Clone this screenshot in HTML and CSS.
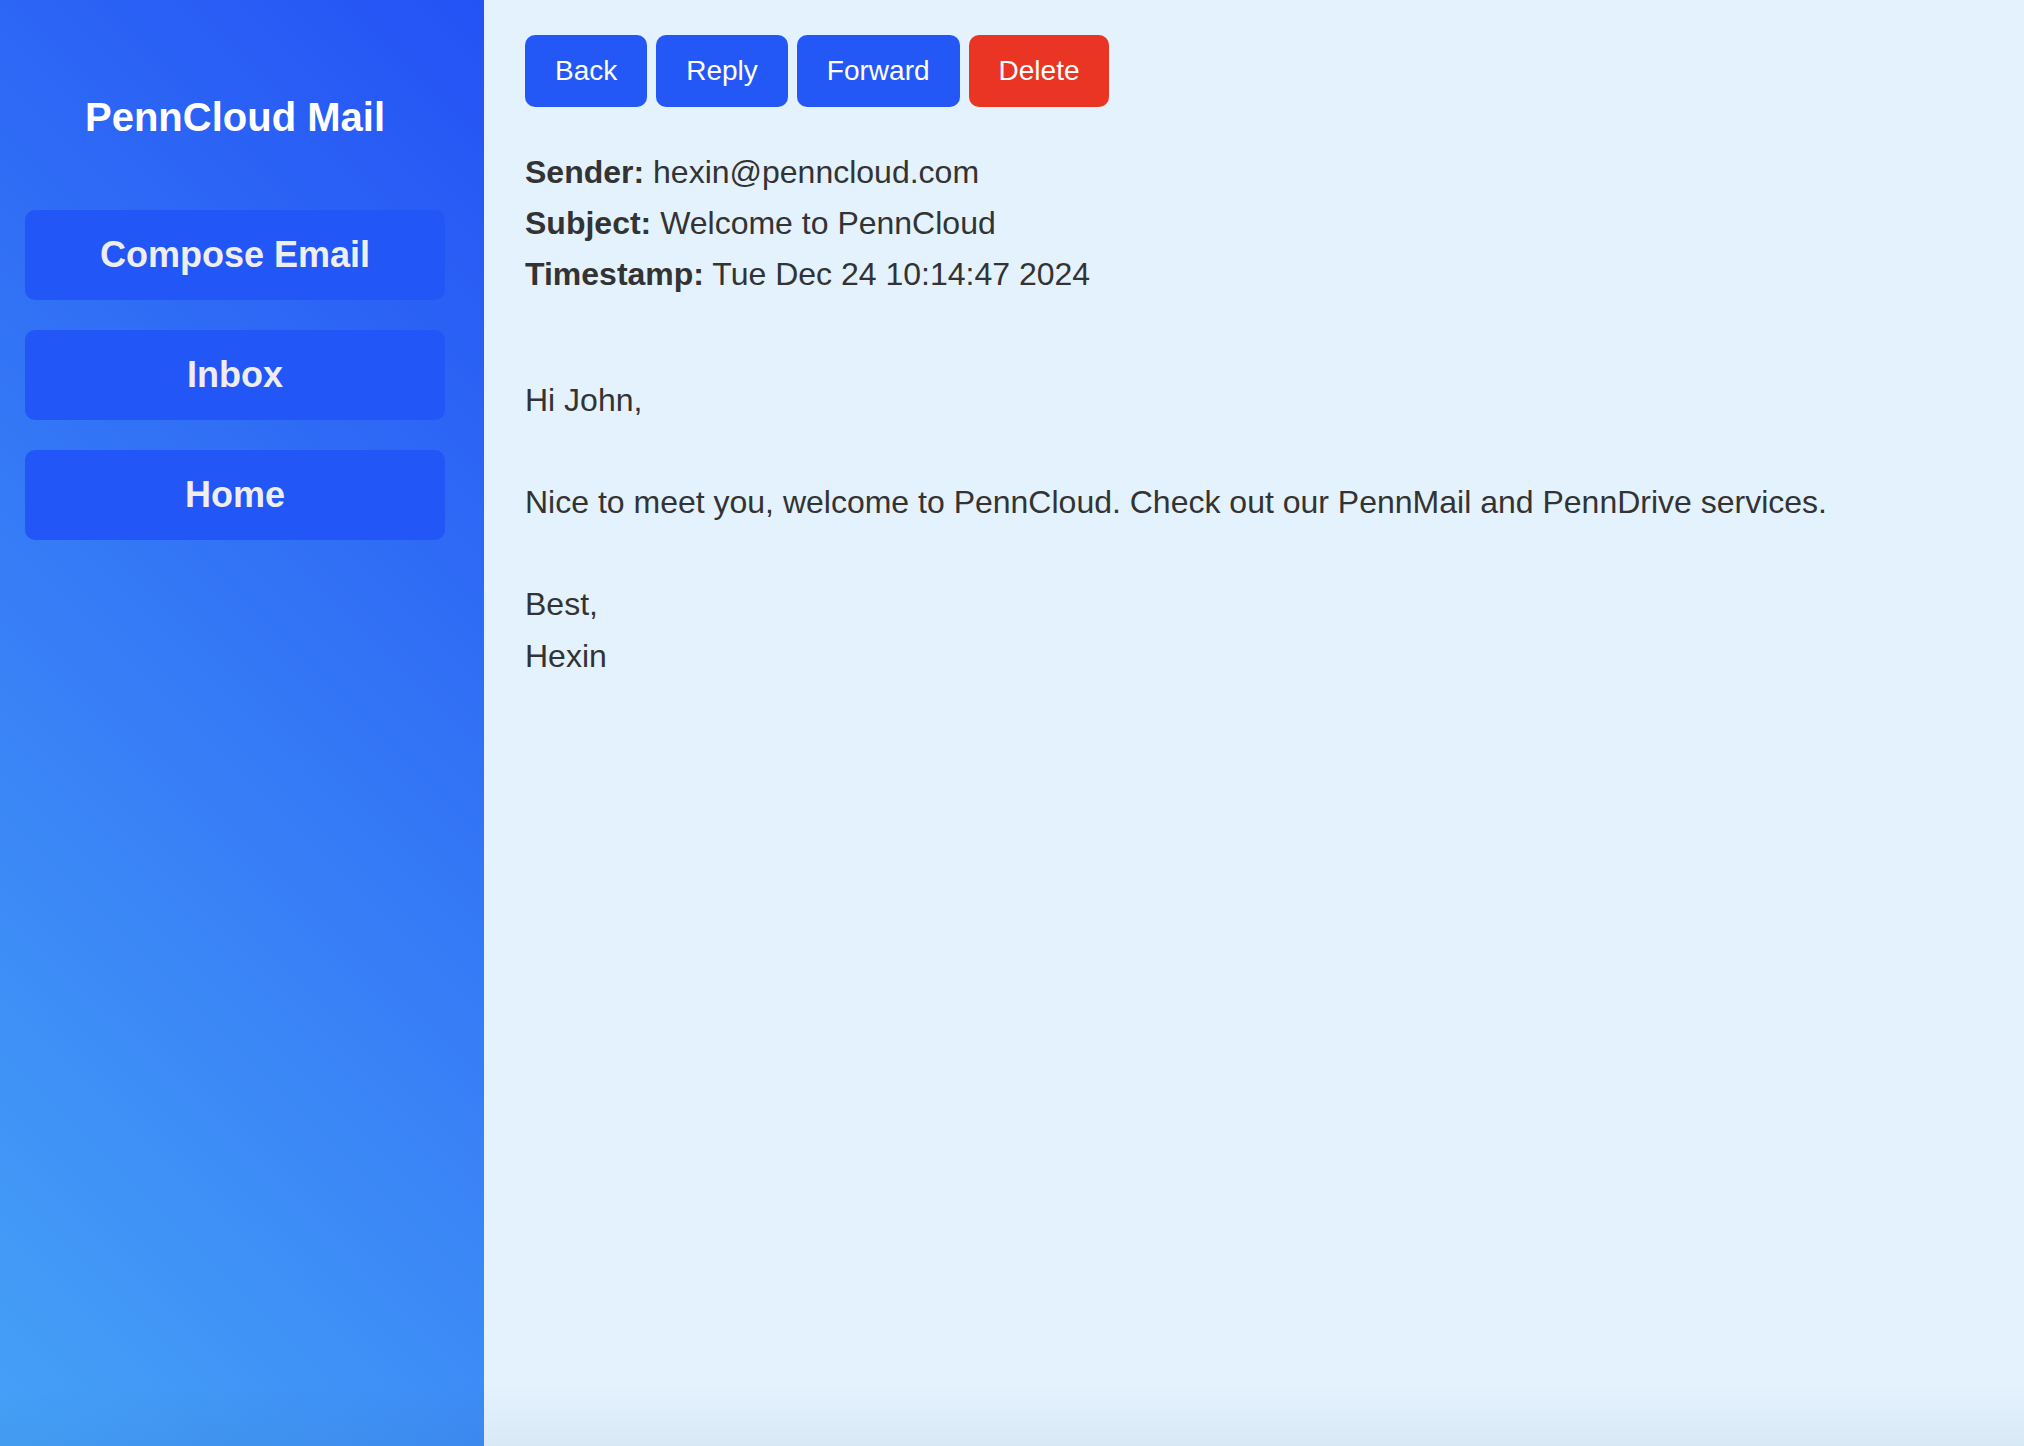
FILE: index.html
```html
<!DOCTYPE html>
<html lang="en">
<head>
<meta charset="utf-8">
<title>PennCloud Mail</title>
<link rel="stylesheet" href="styles.css">
</head>
<body>
<div class="layout">
  <aside class="sidebar">
    <h2 class="brand">PennCloud Mail</h2>
    <nav class="nav">
      <a class="nav-btn" href="#">Compose Email</a>
      <a class="nav-btn" href="#">Inbox</a>
      <a class="nav-btn" href="#">Home</a>
    </nav>
  </aside>
  <main class="main">
    <div class="actions">
      <button class="btn">Back</button>
      <button class="btn">Reply</button>
      <button class="btn">Forward</button>
      <button class="btn btn-danger">Delete</button>
    </div>
    <div class="meta">
      <div class="meta-line"><strong>Sender:</strong> hexin@penncloud.com</div>
      <div class="meta-line"><strong>Subject:</strong> Welcome to PennCloud</div>
      <div class="meta-line"><strong>Timestamp:</strong> Tue Dec 24 10:14:47 2024</div>
    </div>
    <div class="body-text">Hi John,

Nice to meet you, welcome to PennCloud. Check out our PennMail and PennDrive services.

Best,
Hexin</div>
  </main>
</div>
</body>
</html>
```

FILE: styles.css
```css
html, body {
  margin: 0;
  padding: 0;
  height: 100%;
}

body {
  font-family: "Liberation Sans", Arial, Helvetica, sans-serif;
  color: #333333;
  background: #e3f2fd;
}

.layout {
  display: flex;
  height: 100vh;
}

.sidebar {
  width: 420px;
  flex: 0 0 auto;
  padding: 0 39px 0 25px;
  background:
    linear-gradient(to bottom, rgba(20, 40, 90, 0) calc(100% - 60px), rgba(20, 40, 90, 0.05) 100%),
    linear-gradient(45deg, #46a2f7 0%, #2452f5 100%);
}

.brand {
  margin: 94px 0 0 0;
  height: 46px;
  line-height: 46px;
  font-size: 40px;
  font-weight: bold;
  color: #ffffff;
  text-align: center;
}

.nav {
  display: flex;
  flex-direction: column;
  gap: 30px;
  margin-top: 70px;
}

.nav-btn {
  display: block;
  height: 90px;
  line-height: 90px;
  border-radius: 10px;
  background: #2356f6;
  color: #eeeeee;
  font-size: 36px;
  font-weight: bold;
  text-align: center;
  text-decoration: none;
}

.main {
  flex: 1 1 auto;
  padding: 35px 40px 0 41px;
  background:
    linear-gradient(to bottom, rgba(20, 60, 120, 0) calc(100% - 60px), rgba(20, 60, 120, 0.05) 100%),
    #e3f2fd;
}

.actions {
  display: flex;
  gap: 9px;
}

.btn {
  font-family: "Liberation Sans", Arial, Helvetica, sans-serif;
  font-size: 28px;
  height: 72px;
  padding: 0 30px;
  border: none;
  border-radius: 10px;
  background: #2458f6;
  color: #ffffff;
  cursor: pointer;
}

.btn-danger {
  background: #ea3424;
}

.meta {
  margin-top: 40px;
  font-size: 32px;
  line-height: 51.2px;
}

.body-text {
  margin-top: 74px;
  font-size: 32px;
  line-height: 51.2px;
  white-space: pre-line;
}
```
